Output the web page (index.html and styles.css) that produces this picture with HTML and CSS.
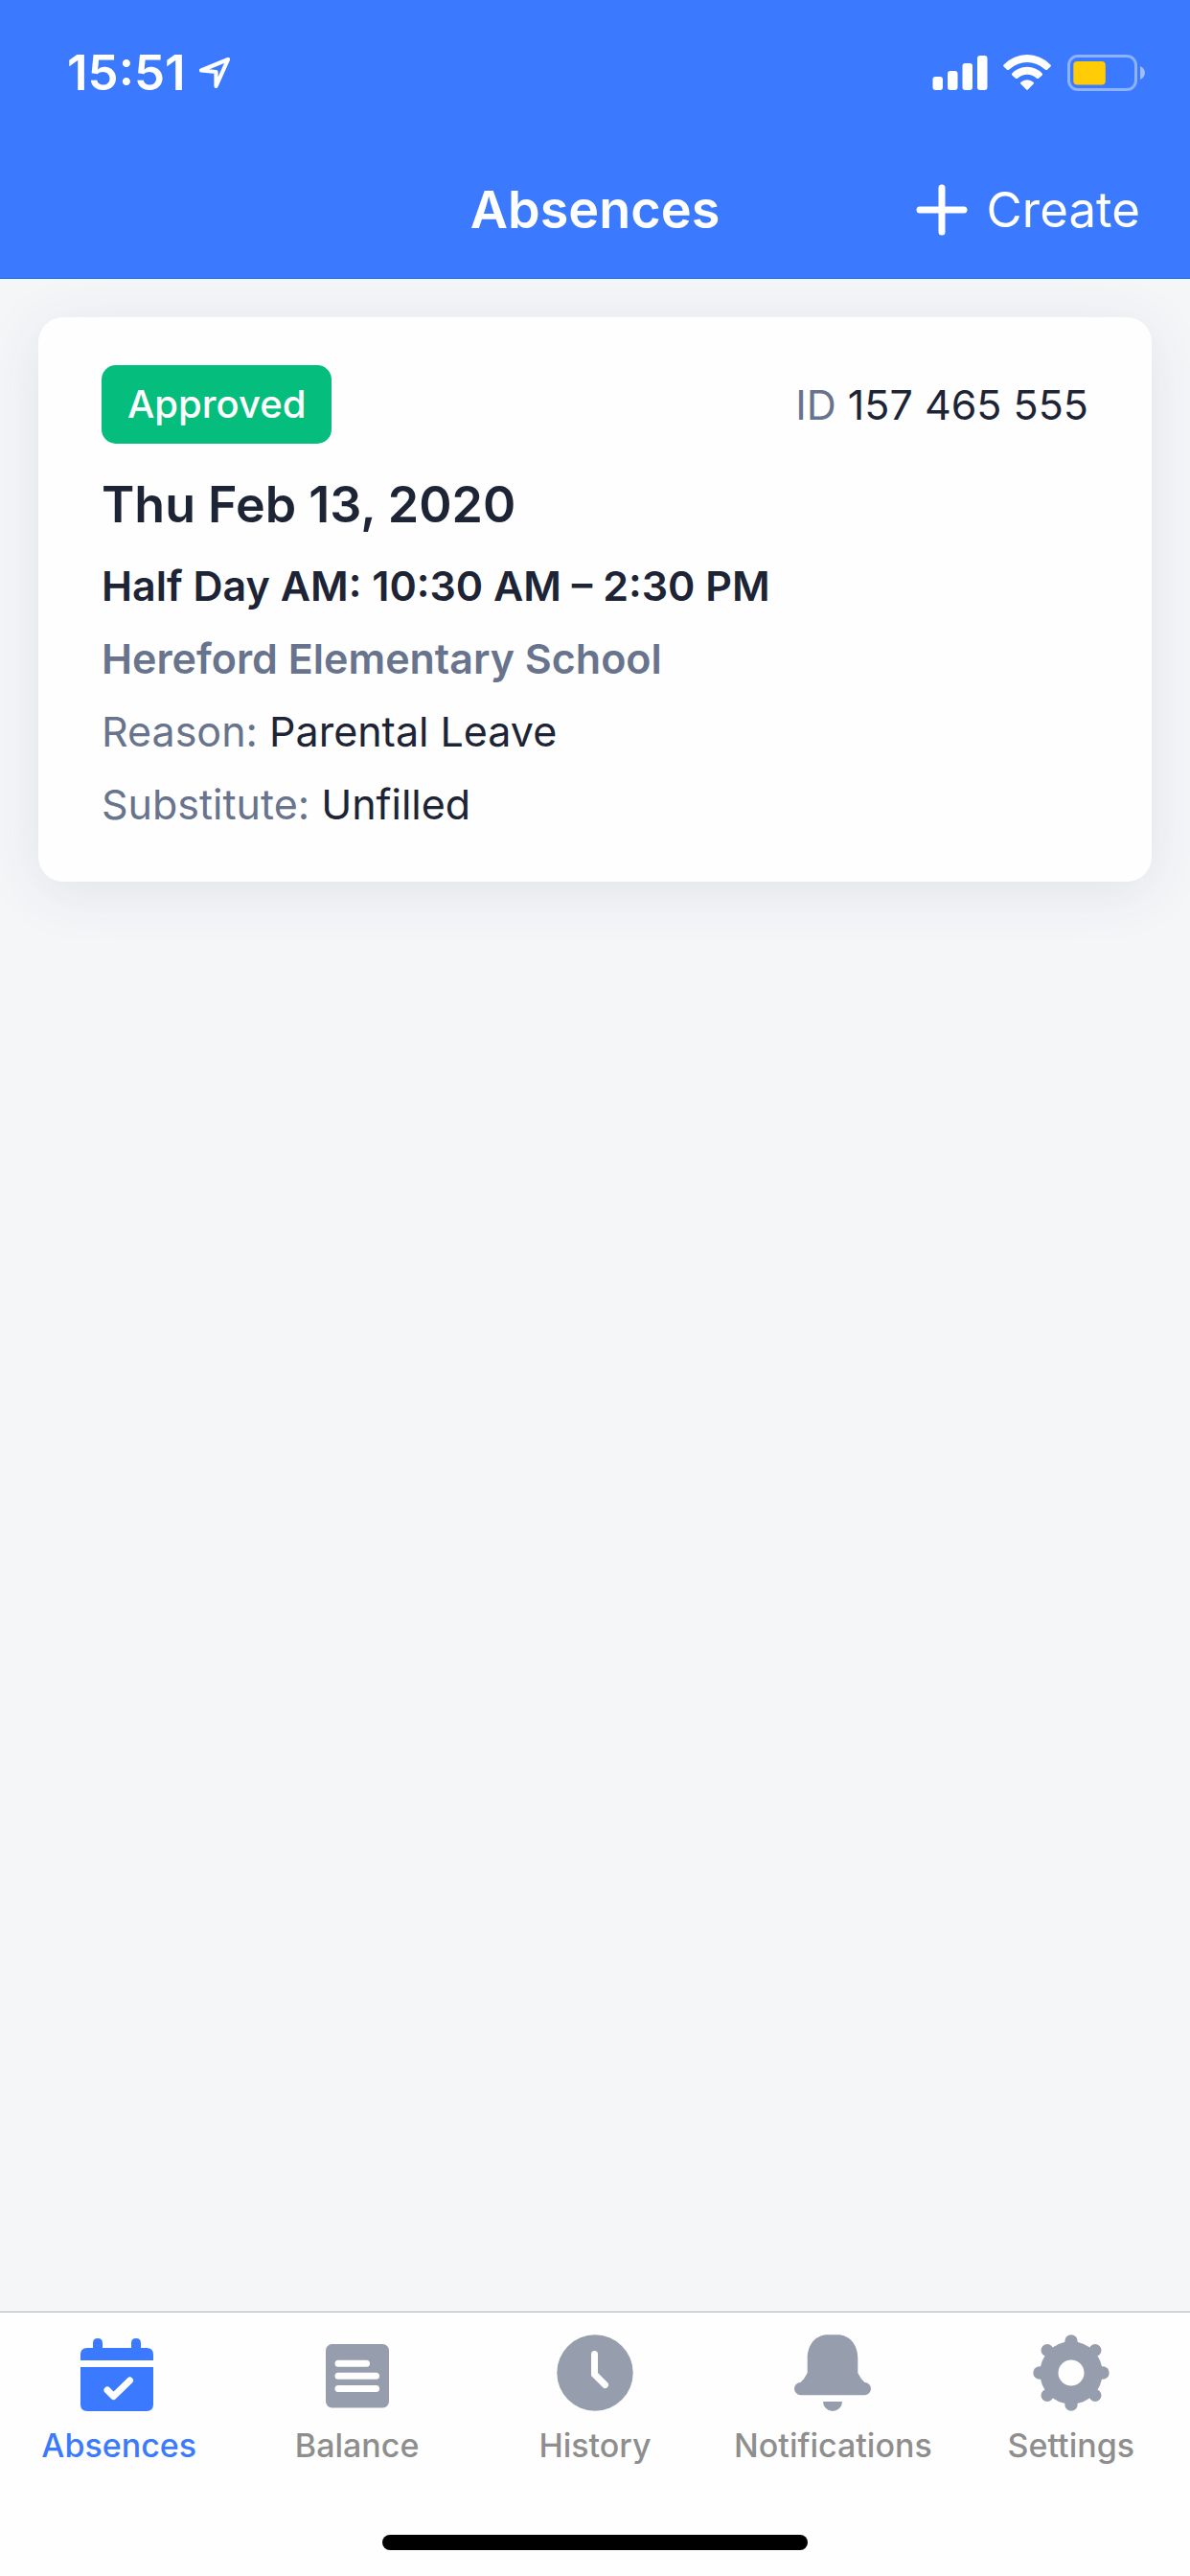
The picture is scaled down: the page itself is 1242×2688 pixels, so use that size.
FILE: index.html
```html
<!DOCTYPE html>
<html lang="en">
<head>
<meta charset="utf-8">
<meta name="viewport" content="width=device-width, initial-scale=1">
<title>Absences</title>
<link rel="stylesheet" href="styles.css">
</head>
<body>
<header class="header">
  <div class="status">
    <div class="status-time">
      <span>15:51</span>
      <svg class="status-location" width="36" height="36" viewBox="0 0 36 36" aria-hidden="true">
        <path d="M32 4 4 15.500 19.500 17V32Z" fill="none" stroke="#fff" stroke-width="4.200" stroke-linejoin="round"/>
      </svg>
    </div>
    <svg width="224" height="40" viewBox="0 0 224 40" aria-hidden="true">
      <g fill="#fff">
        <rect x="1.500" y="24" width="10.500" height="14" rx="3"/>
        <rect x="17" y="18" width="10.500" height="20" rx="3"/>
        <rect x="32.500" y="10" width="10.500" height="28" rx="3"/>
        <rect x="48" y="2" width="10.500" height="36" rx="3"/>
        <path d="M75.500 13.500Q74.600 12.500 75.600 11.500Q86 1 100 1Q114 1 124.400 11.500Q125.400 12.500 124.500 13.500L121 16.700Q120 17.500 119 16.700Q110.500 9 100 9Q89.500 9 81 16.700Q80 17.500 79 16.700Z"/>
        <path d="M84.300 22.500Q83.400 21.500 84.400 20.500Q91 13.800 100 13.800Q109 13.800 115.600 20.500Q116.600 21.500 115.700 22.500L112 25.700Q111 26.500 110 25.700Q105.500 21.800 100 21.800Q94.500 21.800 90 25.700Q89 26.500 88 25.700Z"/>
        <path d="M93.300 31.500Q92.500 30.600 93.400 29.800Q96.300 27.300 100 27.300Q103.700 27.300 106.600 29.800Q107.500 30.600 106.700 31.500L100.800 37.400Q100 38.100 99.200 37.400Z"/>
      </g>
      <rect x="143.500" y="2.500" width="70" height="35" rx="9.500" fill="none" stroke="#fff" stroke-opacity=".42" stroke-width="3"/>
      <rect x="148.300" y="8" width="33.500" height="24.500" rx="4" fill="#ffcc05"/>
      <path d="M218 13Q223 15.500 223 20T218 27Z" fill="#fff" fill-opacity=".5"/>
    </svg>
  </div>
  <div class="nav">
    <h1 class="nav-title">Absences</h1>
    <button class="nav-create" type="button">
      <svg width="54" height="54" viewBox="0 0 54 54" aria-hidden="true">
        <path d="M27 4V50M4 27H50" stroke="#fff" stroke-width="7" stroke-linecap="round"/>
      </svg>
      <span>Create</span>
    </button>
  </div>
</header>

<main class="content">
  <article class="card">
    <div class="card-top">
      <span class="badge">Approved</span>
      <p class="card-id"><span class="muted">ID</span> 157 465 555</p>
    </div>
    <h2 class="card-date">Thu Feb 13, 2020</h2>
    <p class="card-line strong">Half Day AM: 10:30 AM – 2:30 PM</p>
    <p class="card-line strong muted">Hereford Elementary School</p>
    <p class="card-line"><span class="muted">Reason:</span> Parental Leave</p>
    <p class="card-line"><span class="muted">Substitute:</span> Unfilled</p>
  </article>
</main>

<footer class="footer">
  <nav class="tabs">
    <a class="tab tab-active" href="#absences" aria-current="page">
      <svg width="80" height="80" viewBox="0 0 80 80" aria-hidden="true">
        <path fill="#3b7aff" d="M0 31V21Q0 14 7 14H13V9Q13 4 18 4T23 9V14H53V9Q53 4 58 4T63 9V14H69Q76 14 76 21V27H0Z"/>
        <path fill="#3b7aff" d="M0 34H76V73Q76 80 69 80H7Q0 80 0 73Z"/>
        <path d="M0 27H76V34H0Z" fill="#fefefe"/>
        <path d="M28 58 34.500 64.500 51.500 48" fill="none" stroke="#fefefe" stroke-width="7" stroke-linecap="round" stroke-linejoin="round"/>
      </svg>
      <span>Absences</span>
    </a>
    <a class="tab" href="#balance">
      <svg width="80" height="80" viewBox="0 0 80 80" aria-hidden="true">
        <rect x="7" y="10" width="66" height="66.500" rx="6.500" fill="#969dad"/>
        <path d="M20 30.200H49.500M20 43.300H59.500M20 56.400H59.500" stroke="#fefefe" stroke-width="7" stroke-linecap="round"/>
      </svg>
      <span>Balance</span>
    </a>
    <a class="tab" href="#history">
      <svg width="80" height="80" viewBox="0 0 80 80" aria-hidden="true">
        <circle cx="40" cy="40" r="39.700" fill="#969dad"/>
        <path d="M39.500 20.500V41.500L50.500 52.500" fill="none" stroke="#fefefe" stroke-width="7" stroke-linecap="round"/>
      </svg>
      <span>History</span>
    </a>
    <a class="tab" href="#notifications">
      <svg width="80" height="80" viewBox="0 0 80 80" aria-hidden="true">
        <path fill="#969dad" d="M35 .3H45C58 .3 66.300 11 66.300 25V40Q69 46 73.500 50A6.600 6.600 0 0 1 73.300 63.200H6.700A6.600 6.600 0 0 1 6.500 50Q11 46 13.700 40V25C13.700 11 22 .3 35 .3ZM30 70H50A10 10 0 0 1 30 70Z"/>
      </svg>
      <span>Notifications</span>
    </a>
    <a class="tab" href="#settings">
      <svg width="80" height="80" viewBox="0 0 80 80" aria-hidden="true">
        <g fill="#969dad">
          <circle cx="40" cy="40" r="32.700"/>
          <circle cx="40" cy="7" r="6.700"/>
          <circle cx="40" cy="73" r="6.700"/>
          <circle cx="7" cy="40" r="6.700"/>
          <circle cx="73" cy="40" r="6.700"/>
          <circle cx="15" cy="16.500" r="6.500"/>
          <circle cx="65" cy="16.500" r="6.500"/>
          <circle cx="15" cy="63.500" r="6.500"/>
          <circle cx="65" cy="63.500" r="6.500"/>
        </g>
        <circle cx="40" cy="40" r="13.500" fill="#fefefe"/>
      </svg>
      <span>Settings</span>
    </a>
  </nav>
  <div class="home-indicator"></div>
</footer>
</body>
</html>
```
FILE: styles.css
```css
* {
  box-sizing: border-box;
}

body {
  margin: 0;
  min-height: 100vh;
  display: flex;
  flex-direction: column;
  background: #f5f6f8;
  color: #1c2435;
  font-family: Inter, "Liberation Sans", sans-serif;
  font-size: 43px;
  line-height: 76px;
}

h1,
h2,
p {
  margin: 0;
}

svg {
  display: block;
  flex: none;
}

.header {
  position: relative;
  background: #3b7aff;
  color: #fff;
}

.status {
  display: flex;
  justify-content: space-between;
  align-items: center;
  height: 148px;
  padding: 4px 46px 0 70px;
}

.status-time {
  display: flex;
  align-items: center;
  gap: 12px;
  font-size: 51px;
  font-weight: 600;
}

.nav {
  display: grid;
  grid-template-columns: 1fr auto 1fr;
  align-items: center;
  height: 143px;
  padding: 0 52px;
  border-bottom: 1px solid #0f68ff;
}

.nav-title {
  grid-column: 2;
  font-size: 54px;
  font-weight: 600;
}

.nav-create {
  justify-self: end;
  display: flex;
  align-items: center;
  gap: 20px;
  padding: 0;
  border: 0;
  background: none;
  color: inherit;
  font: inherit;
  font-size: 51px;
}

.content {
  flex: 1;
  padding: 40px;
}

.card {
  padding: 50px 66px 43px;
  border-radius: 26px;
  background: #fefefe;
  box-shadow: 0 10px 60px rgba(40, 55, 100, 0.1);
}

.card-top {
  display: flex;
  justify-content: space-between;
  align-items: center;
  margin-bottom: 26px;
}

.badge {
  padding: 0 27px;
  border-radius: 15px;
  background: #05be7d;
  color: #fff;
  font-size: 40px;
  font-weight: 500;
  line-height: 82px;
}

.card-date {
  margin-bottom: 8px;
  font-size: 52px;
  font-weight: 600;
}

.strong {
  font-weight: 600;
}

.muted {
  color: #68748d;
}

.footer {
  display: flex;
  flex-direction: column;
  align-items: center;
  gap: 73px;
  padding: 23px 0 27px;
  border-top: 1px solid #b2b2b2;
  background: #fefefe;
}

.tabs {
  display: grid;
  grid-template-columns: repeat(5, 1fr);
  width: 100%;
}

.tab {
  display: flex;
  flex-direction: column;
  align-items: center;
  gap: 16px;
  color: #8e8e8e;
  font-size: 34px;
  font-weight: 500;
  line-height: 40px;
  text-decoration: none;
}

.tab-active {
  color: #3b7aff;
}

.home-indicator {
  width: 444px;
  height: 16px;
  border-radius: 8px;
  background: #000;
}
```
